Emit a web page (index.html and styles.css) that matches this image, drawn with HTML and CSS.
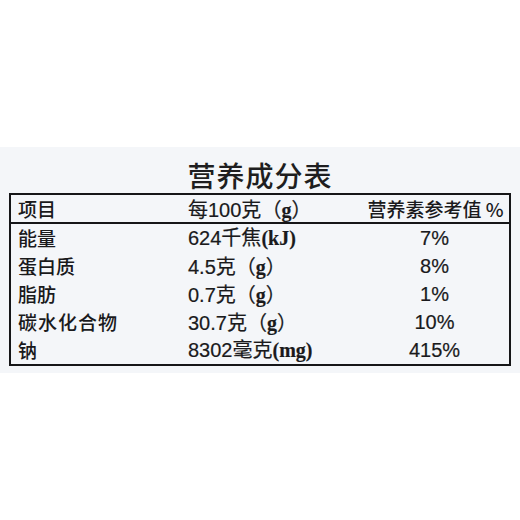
FILE: index.html
```html
<!DOCTYPE html>
<html lang="zh-CN">
<head>
<meta charset="utf-8">
<title>营养成分表</title>
<link rel="stylesheet" href="styles.css">
</head>
<body>
<div class="panel">
  <h1 class="title">营养成分表</h1>
  <div class="table">
    <div class="row head">
      <div class="c1">项目</div>
      <div class="c2">每100克<span class="fw">（<b class="ser">g</b>）</span></div>
      <div class="c3">营养素参考值 %</div>
    </div>
    <div class="row">
      <div class="c1">能量</div>
      <div class="c2">624千焦<b class="ser">(kJ)</b></div>
      <div class="c3">7%</div>
    </div>
    <div class="row">
      <div class="c1">蛋白质</div>
      <div class="c2">4.5克<span class="fw">（<b class="ser">g</b>）</span></div>
      <div class="c3">8%</div>
    </div>
    <div class="row">
      <div class="c1">脂肪</div>
      <div class="c2">0.7克<span class="fw">（<b class="ser">g</b>）</span></div>
      <div class="c3">1%</div>
    </div>
    <div class="row">
      <div class="c1 wide">碳水化合物</div>
      <div class="c2">30.7克<span class="fw">（<b class="ser">g</b>）</span></div>
      <div class="c3">10%</div>
    </div>
    <div class="row">
      <div class="c1">钠</div>
      <div class="c2">8302毫克<b class="ser">(mg)</b></div>
      <div class="c3">415%</div>
    </div>
  </div>
</div>
</body>
</html>
```
FILE: styles.css
```css
html, body {
  margin: 0;
  padding: 0;
  background: #ffffff;
}
body {
  width: 520px;
  height: 520px;
  overflow: hidden;
  font-family: "Liberation Sans", "Noto Sans CJK SC", sans-serif;
  color: #1a1a1c;
}
.panel {
  margin-top: 147px;
  background: #f4f6f9;
  padding: 0 9px 7px 9px;
}
.title {
  margin: 0;
  padding-top: 10px;
  height: 36px;
  line-height: 36px;
  text-align: center;
  font-size: 28px;
  font-weight: 500;
  font-family: "Noto Sans CJK SC", sans-serif;
  letter-spacing: 1px;
  color: #1e1e20;
}
.table {
  border: 2px solid #161618;
}
.row {
  display: grid;
  grid-template-columns: 177px 1fr 149px;
  height: 28px;
  line-height: 28px;
  font-size: 20px;
}
.row.head {
  height: 27px;
  line-height: 27px;
  border-bottom: 2px solid #161618;
}
.c1 {
  padding-left: 7px;
  font-family: "Noto Sans CJK SC", sans-serif;
  font-weight: 500;
  font-size: 19px;
}
.c1.wide {
  letter-spacing: 1px;
}
.c2 {
  white-space: nowrap;
}
.c2, .c3 {
  -webkit-text-stroke: 0.2px #1a1a1c;
}
.c3 {
  text-align: center;
  white-space: nowrap;
}
.head .c3 {
  font-family: "Noto Sans CJK SC", sans-serif;
  font-weight: 500;
  font-size: 19px;
  padding-left: 2px;
  -webkit-text-stroke: 0;
}
.fw {
  font-family: "Noto Sans CJK SC", sans-serif;
}
.ser {
  font-family: "Liberation Serif", serif;
  font-weight: 700;
}
```
